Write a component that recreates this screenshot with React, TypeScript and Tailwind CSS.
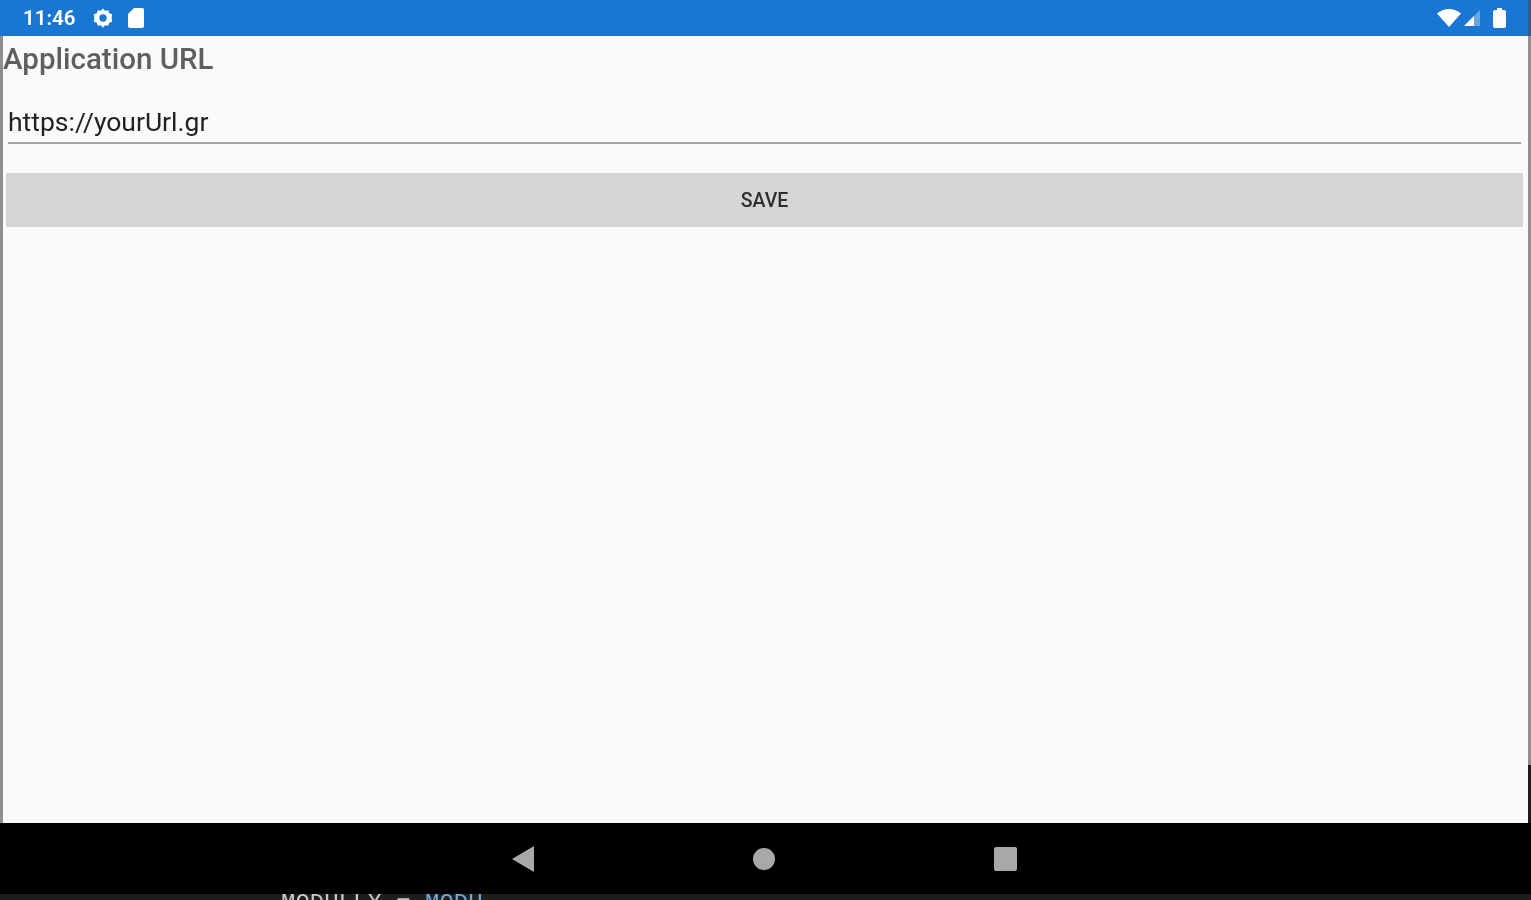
import React from "react";

export default function App() {
  return (
    <div className="flex h-[900px] w-full flex-col overflow-hidden bg-black font-['Roboto','Liberation_Sans',sans-serif]">
      <div className="flex h-[36px] shrink-0 items-center bg-[#1976d2] pl-[23px] text-white">
        <span className="text-[20.500px] font-semibold leading-none text-white blur-[0.5px]">11:46</span>
        <svg className="ml-[17px] blur-[0.6px]" width="22" height="22" viewBox="0 0 24 24" fill="#fff" aria-hidden="true">
          <path fillRule="evenodd" d="M12 1.500l2.200 2.600 3.400-.5 1.200 3.200 3.200 1.200-.5 3.400 0 1.200.5 3.400-3.200 1.200-1.200 3.200-3.400-.5L12 22.500l-2.200-2.600-3.400.5-1.200-3.200-3.200-1.200.5-3.400 0-1.200-.5-3.400 3.200-1.200 1.200-3.200 3.400.5zM12 8a4 4 0 100 8 4 4 0 000-8z" />
        </svg>
        <svg className="ml-[13px] blur-[0.6px]" width="18" height="20" viewBox="0 0 18 20" fill="#fff" aria-hidden="true">
          <path d="M7 0h8a2 2 0 012 2v16a2 2 0 01-2 2H3a2 2 0 01-2-2V6z" />
        </svg>
        <div className="flex-1" />
        <svg className="blur-[0.6px]" width="24" height="18" viewBox="0 0 24 18" fill="#fff" aria-hidden="true">
          <path d="M0 4.500C3 1.800 7.500 0 12 0s9 1.800 12 4.500L12 18z" />
        </svg>
        <svg className="ml-[3px] blur-[0.6px]" width="18" height="18" viewBox="0 0 18 18" aria-hidden="true">
          <path d="M0 17L16 1v16z" fill="#fff" fillOpacity="0.35" />
          <path d="M0 17l10-10v10z" fill="#fff" />
        </svg>
        <svg className="ml-[11px] blur-[0.6px]" width="13" height="20" viewBox="0 0 13 20" fill="#fff" aria-hidden="true">
          <path d="M4 0h5v2h2a2 2 0 012 2v14a2 2 0 01-2 2H2a2 2 0 01-2-2V4a2 2 0 012-2h2z" />
        </svg>
        <div className="ml-[22px] h-full w-[3px] bg-[#2f5f8f]" />
      </div>

      <div className="flex h-[787px] shrink-0">
        <div className="w-[3px] bg-[#8f8f8f]" />
        <div className="flex min-w-0 flex-1 flex-col bg-[#fafafa]">
          <div className="h-[46px] pt-[6px] text-[29.500px] font-medium leading-[34px] text-[#5f5f5f] blur-[0.7px]">Application URL</div>
          <div className="ml-[5px] mr-[7px] h-[62px] border-b-2 border-[#a3a3a3] pt-[24px] text-[26.500px] leading-[32px] text-[#222222]">
            <span className="block blur-[0.7px]">https://yourUrl.gr</span>
          </div>
          <div className="ml-[3px] mr-[5px] mt-[29px] flex h-[54px] items-center justify-center bg-[#d6d6d6] pt-[1px] text-[19.500px] font-medium leading-none text-[#2e2e2e] blur-[0.6px]">SAVE</div>
        </div>
        <div className="flex w-[3px] flex-col">
          <div className="flex-1 bg-[#8f8f8f]" />
          <div className="h-[58px] bg-[#1a1a1a]" />
        </div>
      </div>

      <div className="flex h-[71px] shrink-0 items-center justify-center gap-[219px] bg-black pr-[2px]">
        <svg className="blur-[0.6px]" width="22" height="26" viewBox="0 0 22 26" aria-hidden="true"><path d="M0 13L22 0v26z" fill="#a8a8a8" /></svg>
        <div className="h-[22px] w-[22px] rounded-full bg-[#a8a8a8] blur-[0.6px]" />
        <div className="h-[24px] w-[23px] rounded-[2px] bg-[#a8a8a8] blur-[0.6px]" />
      </div>

      <div className="h-[6px] shrink-0 overflow-hidden bg-[#1e1e1e] pl-[281px]">
        <div className="whitespace-nowrap font-['Liberation_Mono',monospace] text-[24px] leading-[19px] text-[#c8c8c8] blur-[0.5px]">
          <span>MODULLX = </span><span className="text-[#6fa8d6]">MODU</span>
        </div>
      </div>
    </div>
  );
}
